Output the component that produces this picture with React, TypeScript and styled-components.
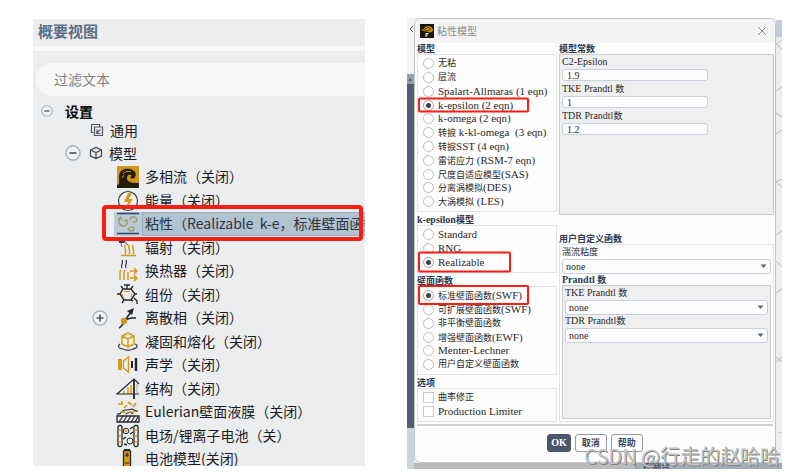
import React from "react";
import styled, { createGlobalStyle, css } from "styled-components";

const GlobalStyle = createGlobalStyle`
  * { box-sizing: border-box; }
  body { margin: 0; background: #fff; }
  button, input, select { font: inherit; color: inherit; }
`;

const Page = styled.main`
  display: grid;
  grid-template-columns: 332fr 375fr;
  gap: 42px;
  align-items: start;
  padding: 18px 14px 6px 33px;
  font-family: "Noto Sans CJK SC", sans-serif;
`;

/* ---------- outline tree ---------- */

const Outline = styled.section`
  position: relative;
  margin-top: 1px;
  min-width: 0;
  overflow: hidden;
  background: #ebedef;
  color: #1c1c1e;
  font-size: 14px;
`;

const OutlineTitle = styled.h2`
  margin: 0;
  padding: 0 5px;
  height: 32px;
  border-bottom: 5px solid #f8f8f8;
  font-size: 15px;
  line-height: 24px;
  font-weight: 700;
  color: #5c6d86;
`;

const Filter = styled.input`
  display: block;
  width: calc(100% - 3px);
  height: 33px;
  margin: 12px 0 6px 3px;
  padding: 0 18px 2px;
  border: 0;
  border-radius: 17px 0 0 17px;
  background: #f8f8f8;
  &::placeholder { color: #838383; opacity: 1; }
`;

const Tree = styled.ul`
  margin: 0;
  padding: 0;
  list-style: none;
`;

const Branch = styled.li<{ $h: number; $indent: number }>`
  display: flex;
  align-items: center;
  height: ${(p) => p.$h}px;
  padding-left: ${(p) => p.$indent}px;
  white-space: pre;
`;

const Leaf = styled.li`
  display: flex;
  height: 24px;
  padding-left: 59px;
  white-space: pre;
  &:nth-child(even) { height: 23px; }
  &:last-child { height: 19px; overflow: hidden; }
`;

const ExpanderSlot = styled.span`
  display: flex;
  align-items: center;
  flex: 0 0 22px;
  height: 24px;
`;

const Expander = styled.button<{ $small?: boolean }>`
  display: block;
  width: ${(p) => (p.$small ? 12 : 16)}px;
  height: ${(p) => (p.$small ? 12 : 16)}px;
  padding: 0;
  border: 0;
  background: none;
  svg { display: block; width: 100%; height: 100%; }
`;

const BranchIcon = styled.svg`
  width: 14px;
  height: 14px;
  margin: 0 6px 0 8px;
`;

const Root = styled.b`
  margin-left: 12px;
  color: #000;
`;

const Entry = styled.span<{ $selected?: boolean }>`
  display: flex;
  flex: 1;
  align-items: center;
  height: 24px;
  padding-left: 2px;
  ${(p) =>
    p.$selected &&
    css`
      background: #bccad8;
      color: #2b3440;
    `}
`;

const EntryIcon = styled.svg`
  flex: none;
  width: 24px;
  height: 24px;
  margin-right: 2px;
`;

const EntryText = styled.span<{ $selected?: boolean }>`
  flex: 1;
  padding: 0 0 2px 3px;
  line-height: 22px;
  ${(p) =>
    p.$selected &&
    css`
      background: #b1c2d1;
      box-shadow: inset 1px 1px #98acbe, inset 0 -1px #98acbe;
    `}
`;

const OutlineMark = styled.div`
  position: absolute;
  left: 69px;
  right: 2px;
  top: 186px;
  height: 36px;
  border: 4px solid #fb1d12;
  border-radius: 4px;
`;

/* ---------- dialog on its workspace ---------- */

const Workspace = styled.section`
  position: relative;
  display: grid;
  grid-template-columns: 7px 1fr 6px;
  grid-template-rows: auto 6px;
  min-width: 0;
  overflow: hidden;
  background: #eee;
`;

const LeftStrip = styled.div`
  grid-row: 1 / 3;
  display: flex;
  flex-direction: column;
  background: #545e6e;
  svg { display: block; }
`;

const StripTop = styled.div`
  height: 56px;
  background: #f4f4f5;
`;
const StripTab = styled.div`
  height: 10px;
  background: #93a1af;
`;
const StripBottom = styled.div`
  height: 41px;
  margin-top: auto;
  background: #ccd5da;
`;

const RightStrip = styled.div`
  grid-column: 3;
  border-top: 2px solid #fff;
  background: #ededed;
  svg { display: block; width: 6px; height: 100%; }
`;

const StatusStrip = styled.div`
  grid-column: 2 / 4;
  display: grid;
  grid-template-columns: 221fr 147fr;
  overflow: hidden;
  background: #b9babc;
`;

const StatusTitle = styled.div`
  height: 6px;
  padding-left: 7px;
  overflow: hidden;
  border-left: 1px solid #8f949b;
  background: #a3abb5;
  font-size: 9px;
  line-height: 7px;
  font-weight: 700;
  color: #48566a;
`;

const Dialog = styled.div`
  min-width: 0;
  overflow: hidden;
  border: 1px solid #c3c3c3;
  border-radius: 7px;
  background: #fdfdfd;
  color: #2a2a2a;
  font-size: 9px;
`;

const TitleBar = styled.header`
  display: flex;
  align-items: center;
  gap: 3px;
  height: 24px;
  padding: 0 6px 0 5px;
  background: #f3f3f3;
  font-size: 10px;
  line-height: 20px;
  color: #8c8c8c;
`;

const CloseButton = styled.button`
  width: 14px;
  height: 14px;
  margin-left: auto;
  padding: 2px;
  border: 0;
  background: none;
  svg { display: block; }
`;

const Latin = styled.span`
  font-family: "Liberation Serif", serif;
  font-size: 11px;
`;

const Columns = styled.div`
  display: grid;
  grid-template-columns: 140fr 215fr;
  gap: 2px;
  margin: 1px 1px 0 2px;
`;

const LeftColumn = styled.div`
  display: flex;
  flex-direction: column;
  gap: 3px;
`;

const RightColumn = styled.div`
  display: grid;
  grid-template-rows: 171fr 189fr;
  gap: 19px;
`;

const Group = styled.div`
  display: flex;
  flex-direction: column;
  min-width: 0;
`;

const GroupTitle = styled.div`
  height: 10px;
  line-height: 10px;
  font-weight: 700;
  color: #2c3a52;
  white-space: pre;
  ${Latin} { font-size: 10px; }
`;

const Box = styled.div<{ $shaded?: boolean }>`
  flex: 1;
  padding: 1px 2px 3px;
  border: 1px solid ${(p) => (p.$shaded ? "#cbcbcb" : "#e0e3ec")};
  background: ${(p) => (p.$shaded ? "#efefef" : "#fdfdfd")};
`;

const Options = styled(Box)`
  padding-left: 5px;
`;

const Option = styled.label`
  position: relative;
  display: flex;
  align-items: center;
  gap: 4px;
  height: 14px;
  line-height: 14px;
  white-space: pre;
  &:nth-child(5n) { height: 13px; }
`;

const Tick = styled.input`
  appearance: none;
  flex: none;
  width: 11px;
  height: 11px;
  margin: 0;
  border: 1px solid #cdcdcd;
  background: #fff;
  &[type="radio"] {
    border-color: #bdbdbd;
    border-radius: 50%;
  }
  &[type="radio"]:checked {
    border-color: #a3a3a3;
    background: radial-gradient(circle, #3a3f48 2px, #fff 3px);
  }
`;

const Mark = styled.span<{ $w: number; $h: number }>`
  position: absolute;
  z-index: 1;
  left: -5px;
  top: 50%;
  width: ${(p) => p.$w}px;
  height: ${(p) => p.$h}px;
  transform: translateY(-50%);
  border: 2px solid #fb1d12;
  border-radius: 2px;
`;

const Field = styled.label<{ $gap?: number }>`
  display: block;
  margin-bottom: ${(p) => p.$gap ?? 0}px;
  white-space: pre;
  ${Latin} { font-size: 10px; }
`;

const FieldName = styled.span`
  display: block;
  height: 13px;
  line-height: 12px;
`;

const NumberBox = styled.input`
  display: block;
  width: 70%;
  height: 12px;
  padding: 0 4px;
  border: 1px solid #c6d0de;
  border-radius: 3px;
  background: #fdfdfd;
  font-family: "Liberation Serif", serif;
  font-size: 10px;
  line-height: 10px;
`;

const SelectWrap = styled.span`
  position: relative;
  display: block;
  svg { position: absolute; right: 4px; top: 5px; }
`;

const Select = styled.select`
  appearance: none;
  display: block;
  width: 100%;
  height: 15px;
  padding: 0 3px;
  border: 1px solid #c6d0de;
  border-radius: 3px;
  background: #fdfdfd;
  font-family: "Liberation Serif", serif;
  font-size: 10px;
  line-height: 13px;
`;

const UserBox = styled(Box)`
  display: flex;
  flex-direction: column;
  padding: 1px 2px 2px;
`;

const SubTitle = styled(GroupTitle)`
  height: 11px;
  line-height: 11px;
`;

const Footer = styled.footer`
  display: flex;
  justify-content: center;
  gap: 4px;
  margin: 2px 2px 0;
  padding: 8px 0 9px;
  border-top: 2px solid #d2d2d2;
`;

const Button = styled.button<{ $primary?: boolean }>`
  height: 18px;
  padding: 0 ${(p) => (p.$primary ? 3 : 6)}px;
  border: 1px solid ${(p) => (p.$primary ? "#4b5768" : "#929baa")};
  border-radius: 3px;
  background: ${(p) => (p.$primary ? "#4b5768" : "#fdfdfd")};
  color: ${(p) => (p.$primary ? "#fff" : "#3c4a62")};
  font-weight: 700;
  line-height: 14px;
  ${Latin} { font-size: 10px; }
`;

const Watermark = styled.div`
  position: absolute;
  z-index: 2;
  right: 2px;
  bottom: 0;
  font-size: 20px;
  line-height: 27px;
  white-space: nowrap;
  color: #c4c4c4;
  text-shadow: 1px 1px #828282;
  pointer-events: none;
`;

/* Latin runs take the serif face, Chinese runs the page face. */
const Mixed = ({ text }: { text: string }) => (
  <span>
    {text.split(/([\x20-\x7e]+)/).map((part, i) =>
      i % 2 ? <Latin key={i}>{part}</Latin> : part
    )}
  </span>
);

const Sign = ({ plus }: { plus?: boolean }) => (
  <svg viewBox="0 0 16 16" fill="none">
    <circle cx="8" cy="8" r="7" fill="#f1f3f5" stroke="#a9b2bd" strokeWidth="1.4" />
    <path d={plus ? "M4.5 8h7M8 4.5v7" : "M4.5 8h7"} stroke="#4c5665" strokeWidth="1.7" />
  </svg>
);

const G = "#d39a1c";
const K = "#26282c";

const icons: Record<string, React.ReactNode> = {
  wave: (
    <>
      <rect x="1" y="1" width="22" height="22" fill="#d0961c" />
      <path d="M1 20c3 0 2-4 2-8C3 4 10 3 14 4c5 1 7 5 5 8-1 2-4 2-5 0 1 0 2-1 1-2-2-1-4 0-4 3 0 4 4 5 12 5v5H1z" fill="#241d12" />
      <path d="M7 9c2-3 6-3 8-2M6 13l2-3" stroke="#d0961c" fill="none" />
    </>
  ),
  energy: (
    <>
      <circle cx="12" cy="12" r="9.5" fill="#f3f3f3" stroke="#3b3f45" strokeWidth="1.2" />
      <path d="M12 4l-4 9h4l-2 7 7-10h-4l3-6z" fill={G} />
    </>
  ),
  viscous: (
    <>
      <path d="M1 1.5h22M1 21.500h22" stroke="#26486f" strokeWidth="1.4" />
      <g stroke="#9c9d6a" strokeWidth="1.4" fill="none">
        <path d="M4.5 6c-3 3-1 8 3 8 3 0 5-3 3-6M2 7l2.500-1.500L6.500 8M8 9l2.500-1 1.500 2.500" />
        <path d="M14 8c0-4 7-4 7 0 0 2-3 3-4 1M12 16c1 4 6 4 6 1 0-2-3-3-4-1" />
      </g>
    </>
  ),
  radiation: (
    <>
      <path d="M2 1h6l3 3-3 3H3z" fill="#3a3c42" />
      <path d="M9 3l4 1M8 6l4 3M5 7l1 4" stroke="#74777c" strokeWidth="1.2" />
      <g stroke={G} strokeWidth="1.5" fill="none">
        <path d="M9 18c2-3-1-5 0-9M13 18c2-3-1-5 0-9M17 18c2-3-1-5 0-9M5 19.500h15" />
      </g>
    </>
  ),
  exchanger: (
    <>
      <path d="M6 9c-2-3 2-4 0-8M10 9c-2-3 2-4 0-8" stroke={K} fill="none" strokeWidth="1.2" />
      <path
        d="M4 21v-8l1-2M8 21v-8l1-2M12 21v-8M14 12h7M18 9l3 3-3 3M14 19h7M18 16l3 3-3 3"
        stroke={G}
        strokeWidth="1.5"
        fill="none"
      />
    </>
  ),
  species: (
    <>
      <g stroke={K} strokeWidth="1.4" fill="none">
        <path d="M7 6h8l4 5-4 6H8l-4-6zM7 6L5 3M11 6V2M8 2h6M15 6l2-3M4 11H1M8 17l-2 3M15 17l2 1M18 11h3" />
        <path d="M18 15l3 3v3" />
      </g>
      <path d="M8 8.500h6M7 14l-1-3M15 14l1-3" stroke={G} strokeWidth="1.2" />
    </>
  ),
  discrete: (
    <>
      <path d="M3 22c3-1 4-5 6-7 3-4 7-3 11-3M9 14l6-8" stroke={K} strokeWidth="1.5" fill="none" />
      <path d="M11 5l7-3-2 7z" fill={K} />
      <circle cx="8" cy="15" r="3.2" fill={G} />
    </>
  ),
  melt: (
    <>
      <path d="M6 6l6-3 6 3v8l-6 3-6-3zM6 6l6 3 6-3M12 9v8" stroke={G} strokeWidth="1.5" fill="#f7efd9" />
      <path d="M4 14c-3 2-1 5 3 5 4 2 8 1 10 0 5-1 5-4 2-5" stroke="#45484d" strokeWidth="1.3" fill="none" />
    </>
  ),
  acoustics: (
    <>
      <path d="M2 6h4v11H2z" fill={G} />
      <path d="M7.500 8l5-4v15l-5-4z" stroke={G} strokeWidth="1.4" fill="none" />
      <path d="M16 8v7" stroke={K} strokeWidth="2" />
      <path d="M20 5v13" stroke={K} strokeWidth="2.400" />
    </>
  ),
  structure: (
    <>
      <path d="M8 14v3M12 10v7M15 8v9" stroke={G} strokeWidth="1.5" />
      <path d="M0 17h23M1 17L18 2l5 5" stroke={K} strokeWidth="1.2" fill="none" />
      <path d="M18 2v20" stroke={K} strokeWidth="1.8" />
      <path d="M21 7v9" stroke="#c9ad6b" />
    </>
  ),
  film: (
    <>
      <path d="M1 16h22v6H1z" fill="#f3f3f3" stroke={K} strokeWidth="1.3" />
      <path d="M3 22l4-6M7 22l4-6M11 22l4-6M15 22l4-6M19 22l3-5" stroke={K} strokeWidth="1.3" />
      <path d="M1 14c5 1 4-4 8-4 3 0 5 0 7-1 2 0 2 3 6 2M10 14c2-2 5-2 7 0" stroke={K} strokeWidth="1.2" fill="none" />
      <path d="M2 4h4M6 1v4M12 2l4 3M20 3l-3 4M8 8l3-3M5 12h4M13 12h6" stroke={G} strokeWidth="1.6" />
    </>
  ),
  electric: (
    <>
      <g stroke={K} strokeWidth="1.3" fill="#f3f3f3">
        <rect x="2" y="1.5" width="4" height="21" rx="1.5" />
        <rect x="18" y="1.5" width="4" height="21" rx="1.5" />
      </g>
      <path d="M2.500 6h3M2.500 12h3M2.500 18h3M18.500 6h3M18.500 12h3M18.500 18h3" stroke={G} strokeWidth="1.6" />
      <circle cx="10" cy="7" r="2.800" fill="none" stroke={K} />
      <circle cx="14" cy="17" r="3" fill="none" stroke={K} />
      <path d="M8.500 7h3M10 5.500v3" stroke={G} strokeWidth="1.2" />
      <path d="M14 5l3-2M14 10l3-2M7 15l3-2M8 20l3 1" stroke={K} strokeWidth="1.4" />
    </>
  ),
  battery: (
    <>
      <path d="M8 2h6v3H8z" fill={K} />
      <rect x="7.500" y="3.500" width="7" height="20" rx="1" fill={G} stroke={K} strokeWidth="1.3" />
      <path d="M9 8h4M11 6v4" stroke={K} strokeWidth="1.2" />
      <path d="M9 16h4" stroke={K} />
    </>
  ),
};

const leaves = [
  { icon: "wave", text: "多相流（关闭）" },
  { icon: "energy", text: "能量（关闭）" },
  { icon: "viscous", text: "粘性（Realizable  k-e，标准壁面函数）", selected: true },
  { icon: "radiation", text: "辐射（关闭）" },
  { icon: "exchanger", text: "换热器（关闭）" },
  { icon: "species", text: "组份（关闭）" },
  { icon: "discrete", text: "离散相（关闭）", expandable: true },
  { icon: "melt", text: "凝固和熔化（关闭）" },
  { icon: "acoustics", text: "声学（关闭）" },
  { icon: "structure", text: "结构（关闭）" },
  { icon: "film", text: "Eulerian壁面液膜（关闭）" },
  { icon: "electric", text: "电场/锂离子电池（关）" },
  { icon: "battery", text: "电池模型(关闭)" },
];

type Choice = { text: string; on?: boolean; mark?: [number, number] };

const models: Choice[] = [
  { text: "无粘" },
  { text: "层流" },
  { text: "Spalart-Allmaras (1 eqn)" },
  { text: "k-epsilon (2 eqn)", on: true, mark: [111, 15] },
  { text: "k-omega (2 eqn)" },
  { text: "转捩 k-kl-omega  (3 eqn)" },
  { text: "转捩SST (4 eqn)" },
  { text: "雷诺应力 (RSM-7 eqn)" },
  { text: "尺度自适应模型(SAS)" },
  { text: "分离涡模拟(DES)" },
  { text: "大涡模拟 (LES)" },
];

const kEpsilon: Choice[] = [
  { text: "Standard" },
  { text: "RNG" },
  { text: "Realizable", on: true, mark: [93, 21] },
];

const wall: Choice[] = [
  { text: "标准壁面函数(SWF)", on: true, mark: [111, 20] },
  { text: "可扩展壁面函数(SWF)" },
  { text: "非平衡壁面函数" },
  { text: "增强壁面函数(EWF)" },
  { text: "Menter-Lechner" },
  { text: "用户自定义壁面函数" },
];

const ChoiceGroup = ({ title, name, items, type = "radio" }: {
  title: string;
  name: string;
  items: Choice[];
  type?: "radio" | "checkbox";
}) => (
  <Group role="group" aria-label={title}>
    <GroupTitle><Mixed text={title} /></GroupTitle>
    <Options>
      {items.map((c) => (
        <Option key={c.text}>
          <Tick type={type} name={name} defaultChecked={c.on} />
          <Mixed text={c.text} />
          {c.mark && <Mark $w={c.mark[0]} $h={c.mark[1]} />}
        </Option>
      ))}
    </Options>
  </Group>
);

const NumberField = ({ name, value }: { name: string; value: string }) => (
  <Field $gap={2}>
    <FieldName><Mixed text={name} /></FieldName>
    <NumberBox type="text" defaultValue={value} />
  </Field>
);

const SelectField = ({ name }: { name: string }) => (
  <Field>
    <FieldName><Mixed text={name} /></FieldName>
    <SelectWrap>
      <Select defaultValue="none">
        <option>none</option>
      </Select>
      <svg width="7" height="5" viewBox="0 0 7 5">
        <path d="M0.500 0.500h6L3.500 4z" fill="#5a6678" />
      </svg>
    </SelectWrap>
  </Field>
);

export default function App() {
  return (
    <>
      <GlobalStyle />
      <Page>
        <Outline>
          <OutlineTitle>概要视图</OutlineTitle>
          <Filter type="text" placeholder="过滤文本" aria-label="过滤文本" />
          <Tree>
            <Branch $h={17} $indent={8}>
              <Expander $small aria-label="折叠 设置"><Sign /></Expander>
              <Root>设置</Root>
            </Branch>
            <Branch $h={21} $indent={49}>
              <BranchIcon viewBox="0 0 14 14" fill="none" stroke="#55595f" strokeWidth="1.2">
                <path d="M3.500 9.500h-2v-8h8v2M4.500 4h8v8.500h-8zM6 10.500l4.500-4M7 6.500v4h3.500" />
              </BranchIcon>
              通用
            </Branch>
            <Branch $h={25} $indent={32}>
              <Expander aria-label="折叠 模型"><Sign /></Expander>
              <BranchIcon viewBox="0 0 14 14" fill="none" stroke="#44484e" strokeWidth="1.2">
                <path d="M1.500 4L7 1.500 12.500 4v6L7 12.500 1.500 10zM1.500 4L7 6.500 12.500 4M7 6.500v6" />
              </BranchIcon>
              模型
            </Branch>
          </Tree>
          <Tree>
            {leaves.map((l) => (
              <Leaf key={l.icon}>
                <ExpanderSlot>
                  {l.expandable && <Expander aria-label={"展开 " + l.text}><Sign plus /></Expander>}
                </ExpanderSlot>
                <Entry $selected={l.selected}>
                  <EntryIcon viewBox="0 0 24 24">{icons[l.icon]}</EntryIcon>
                  <EntryText $selected={l.selected}>{l.text}</EntryText>
                </Entry>
              </Leaf>
            ))}
          </Tree>
          <OutlineMark />
        </Outline>

        <Workspace>
          <LeftStrip>
            <StripTop>
              <svg width="7" height="20" viewBox="0 0 7 20" fill="none" stroke="#555">
                <path d="M6 8L3 11l3 3" />
              </svg>
            </StripTop>
            <StripTab>
              <svg width="7" height="10" viewBox="0 0 7 10"><path d="M1 7l2-3 2 3z" fill="#56616f" /></svg>
            </StripTab>
            <StripBottom />
          </LeftStrip>

          <Dialog role="dialog" aria-label="粘性模型">
            <TitleBar>
              <svg width="14" height="14" viewBox="0 0 14 14">
                <rect width="14" height="14" fill="#17130d" />
                <path d="M1 5c3 1 4-3 7-3s5 2 5 4-3 3-5 2-5 0-7-3z" fill="#c98d1b" />
                <path d="M3 5.500c3 1 3-2 5-2s3 1 3 2M5 7c3 0 3-1 5-1" stroke="#4e370d" fill="none" />
                <path d="M6 13V9.500h2.500M6 11h2" stroke="#eee" fill="none" />
              </svg>
              粘性模型
              <CloseButton aria-label="关闭">
                <svg width="10" height="10" viewBox="0 0 10 10" stroke="#8a8a8a" fill="none">
                  <path d="M1 1l8 8M9 1L1 9" />
                </svg>
              </CloseButton>
            </TitleBar>

            <Columns>
              <LeftColumn>
                <ChoiceGroup title="模型" name="model" items={models} />
                <ChoiceGroup title="k-epsilon模型" name="ke" items={kEpsilon} />
                <ChoiceGroup title="壁面函数" name="wall" items={wall} />
                <ChoiceGroup
                  title="选项"
                  name="extra"
                  type="checkbox"
                  items={[{ text: "曲率修正" }, { text: "Production Limiter" }]}
                />
              </LeftColumn>
              <RightColumn>
                <Group>
                  <GroupTitle>模型常数</GroupTitle>
                  <Box $shaded>
                    <NumberField name="C2-Epsilon" value="1.9" />
                    <NumberField name="TKE Prandtl 数" value="1" />
                    <NumberField name="TDR Prandtl数" value="1.2" />
                  </Box>
                </Group>
                <Group>
                  <GroupTitle>用户自定义函数</GroupTitle>
                  <UserBox>
                    <SelectField name="湍流粘度" />
                    <SubTitle><Mixed text="Prandtl 数" /></SubTitle>
                    <Box $shaded>
                      <SelectField name="TKE Prandtl 数" />
                      <SelectField name="TDR Prandtl数" />
                    </Box>
                  </UserBox>
                </Group>
              </RightColumn>
            </Columns>

            <Footer>
              <Button $primary><Mixed text="OK" /></Button>
              <Button>取消</Button>
              <Button>帮助</Button>
            </Footer>
          </Dialog>

          <RightStrip>
            <svg viewBox="0 0 6 443" preserveAspectRatio="none" fill="none" stroke="#bbb">
              <rect width="6" height="17" fill="#c3cad8" stroke="none" />
              <path d="M6 20L0 24l6 5M0 71l6-4M0 93l6 4M0 114l6-4M6 159l-6 3 6 5M0 215l6-4M0 241l6 6M0 273l6-4M0 337l6 5M0 342l6-5M3 413l3-1" />
            </svg>
          </RightStrip>
          <StatusStrip>
            <span />
            <StatusTitle>控制台</StatusTitle>
          </StatusStrip>
          <Watermark>CSDN @行走的赵哈哈</Watermark>
        </Workspace>
      </Page>
    </>
  );
}
